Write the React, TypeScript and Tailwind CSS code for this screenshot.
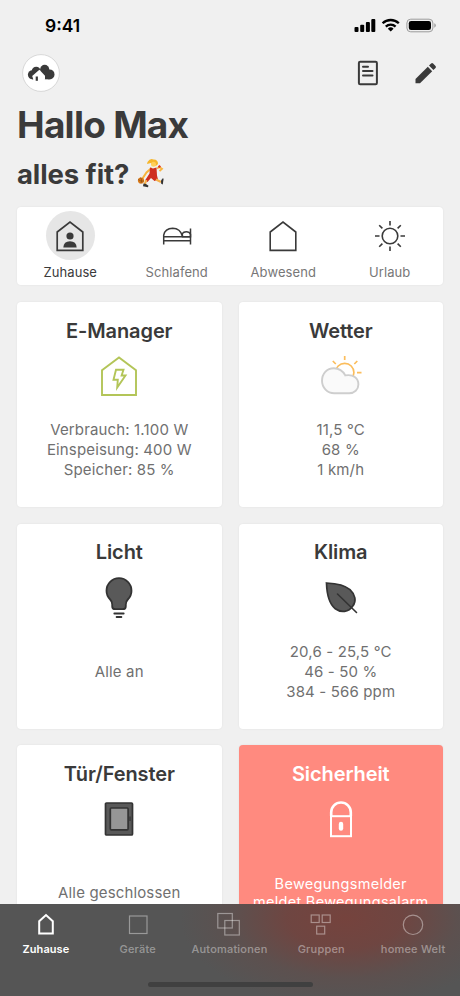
import React from 'react';
import clsx from 'clsx';

const modes = [
    { label: 'Zuhause', icon: <HomePersonIcon />, active: true },
    { label: 'Schlafend', icon: <BedIcon /> },
    { label: 'Abwesend', icon: <HouseIcon /> },
    { label: 'Urlaub', icon: <SunIcon /> },
];

const cards = [
    { title: 'E-Manager', icon: <EnergyIcon />, lines: ['Verbrauch: 1.100 W', 'Einspeisung: 400 W', 'Speicher: 85 %'] },
    { title: 'Wetter', icon: <WeatherIcon />, lines: ['11,5 °C', '68 %', '1 km/h'] },
    { title: 'Licht', icon: <BulbIcon />, lines: ['Alle an'] },
    { title: 'Klima', icon: <LeafIcon />, lines: ['20,6 - 25,5 °C', '46 - 50 %', '384 - 566 ppm'] },
    { title: 'Tür/Fenster', icon: <WindowIcon />, lines: ['Alle geschlossen'] },
    { title: 'Sicherheit', icon: <LockIcon />, lines: ['Bewegungsmelder', 'meldet Bewegungsalarm'], alert: true },
];

const tabs = [
    { label: 'Zuhause', icon: <path d="M8.2 21.5V9.3L15 3l6.800 6.300v12.200z" strokeWidth="2" />, active: true },
    { label: 'Geräte', icon: <rect x="6.5" y="4" width="17.5" height="17.5" /> },
    {
        label: 'Automationen',
        icon: (
            <>
                <rect x="3.8" y="1.5" width="14.5" height="14.5" />
                <rect x="10.8" y="8.5" width="14.5" height="14.5" />
            </>
        ),
    },
    {
        label: 'Gruppen',
        icon: (
            <>
                <rect x="5.2" y="3" width="8" height="7.5" />
                <rect x="16.2" y="3" width="8" height="7.500" />
                <rect x="10.7" y="14.2" width="8" height="7.800" />
            </>
        ),
    },
    { label: 'homee Welt', icon: <circle cx="15" cy="12.800" r="9.700" /> },
];

export default function App() {
    return (
        <div className="flex h-[996px] w-[460px] flex-col overflow-hidden bg-[#f0f0f0] font-['Inter',sans-serif] text-[#3a3a3a]">
            <main className="h-[904px] overflow-hidden">
                <StatusBar />

                <header className="flex h-[46px] items-center justify-between px-[22px]">
                    <HomeeLogo />
                    <div className="flex items-center gap-[35px]">
                        <NotesIcon />
                        <PencilIcon />
                    </div>
                </header>

                <div className="h-[111px] pl-[17px]">
                    <h1 className="pt-[3px] text-[37px] leading-[52px] font-bold tracking-[-0.75px] whitespace-nowrap">Hallo Max</h1>
                    <div className="flex items-center gap-2">
                        <h2 className="pt-px text-[27.5px] leading-[44px] font-bold tracking-[-0.1px] whitespace-nowrap">alles fit?</h2>
                        <BasketballIcon />
                    </div>
                </div>

                <section className="mx-[17px] flex h-[78px] rounded-[4px] bg-white shadow-[0_0_2px_rgba(0,0,0,0.08)]">
                    {modes.map((mode) => (
                        <div key={mode.label} className="flex flex-1 flex-col items-center pt-[4px]">
                            <div
                                className={clsx(
                                    'flex h-[49px] w-[49px] items-center justify-center rounded-full',
                                    mode.active && 'bg-[#e6e6e6]'
                                )}
                            >
                                {mode.icon}
                            </div>
                            <span
                                className={clsx(
                                    'pt-[3px] text-[13px] leading-[18px] tracking-[0.08px]',
                                    mode.active ? 'text-[#3a3a3a]' : 'text-[#777777]'
                                )}
                            >
                                {mode.label}
                            </span>
                        </div>
                    ))}
                </section>

                <section className="mx-[17px] mt-[17px] grid grid-cols-2 gap-x-[17px] gap-y-[16.5px]">
                    {cards.map((card) => (
                        <div
                            key={card.title}
                            className={clsx(
                                'flex h-[205px] flex-col items-center rounded-[4px] pt-[14.5px] text-center shadow-[0_0_2px_rgba(0,0,0,0.08)]',
                                card.alert ? 'bg-[#ff8a7f] text-white' : 'bg-white'
                            )}
                        >
                            <h3 className="text-[20px] leading-[28px] font-semibold tracking-[-0.1px] whitespace-nowrap">{card.title}</h3>
                            <div className="mt-[6.500px] flex h-[50px] items-center justify-center">{card.icon}</div>
                            <div
                                className={clsx(
                                    'mt-[19px] flex h-[60px] flex-col justify-center whitespace-nowrap',
                                    card.alert
                                        ? 'text-[14.5px] leading-[18px] tracking-[0.3px]'
                                        : 'text-[15px] leading-[20px] tracking-[0.15px] text-[#707070]'
                                )}
                            >
                                {card.lines.map((line) => (
                                    <p key={line}>{line}</p>
                                ))}
                            </div>
                        </div>
                    ))}
                </section>
            </main>

            <nav className="h-[92px] bg-[#555555] bg-[radial-gradient(ellipse_165px_88px_at_345px_14px,rgba(119,66,60,0.95),rgba(115,67,62,0.85)_35%,rgba(100,76,73,0.5)_68%,rgba(85,85,85,0)_100%)]">
                <div className="grid h-[76px] w-[459px] grid-cols-5 pt-[8px]">
                    {tabs.map((tab) => (
                        <div
                            key={tab.label}
                            className={clsx(
                                'flex flex-col items-center whitespace-nowrap',
                                tab.active ? 'text-white' : 'text-white/40'
                            )}
                        >
                            <svg width="30" height="26" viewBox="0 0 30 26" fill="none" stroke="currentColor" strokeWidth="1.2">
                                {tab.icon}
                            </svg>
                            <span
                                className={clsx(
                                    'pt-[3px] text-[11px] leading-[16px]',
                                    tab.active ? 'font-semibold tracking-[0.05px]' : 'font-medium tracking-[0.2px]'
                                )}
                            >
                                {tab.label}
                            </span>
                        </div>
                    ))}
                </div>
                <div className="mx-auto mt-[1.500px] h-[5px] w-[165px] rounded-full bg-[#404040]" />
            </nav>
        </div>
    );
}

function StatusBar() {
    return (
        <div className="flex h-[50px] items-center justify-between pt-[2px] pr-[24px] pl-[45px] text-black">
            <span className="text-[17.5px] font-semibold tracking-[0px]">9:41</span>
            <svg width="82" height="16" viewBox="0 0 82 16">
                <rect x="0.500" y="9" width="4" height="5" rx="1" />
                <rect x="6.200" y="6.700" width="4" height="7.300" rx="1" />
                <rect x="11.900" y="4" width="4" height="10" rx="1" />
                <rect x="17.300" y="1" width="4" height="13" rx="1" />
                <g fill="none" stroke="#000" strokeWidth="2.3">
                    <path d="M28.6 5.3a11.6 11.6 0 0 1 16.2 0" />
                    <path d="M31.8 8.6a7 7 0 0 1 9.8 0" />
                </g>
                <path d="M33.8 10.7a4.2 4.2 0 0 1 5.8 0l-2.9 2.9z" />
                <rect x="52.9" y="1.2" width="26" height="12.6" rx="3.8" fill="none" stroke="#9b9b9b" />
                <rect x="54.8" y="3" width="22.2" height="9" rx="2.3" />
                <path d="M80.3 5.3q1.5.6 1.5 2.2t-1.5 2.2z" fill="#9b9b9b" />
            </svg>
        </div>
    );
}

function HomeeLogo() {
    return (
        <svg width="38" height="38" viewBox="0 0 38 38">
            <circle cx="19" cy="19" r="18.4" fill="#fff" stroke="#cfcfcf" strokeWidth="0.8" />
            <g fill="#3a3a3a">
                <circle cx="10.4" cy="20.8" r="4.5" />
                <circle cx="14.2" cy="17.3" r="4.5" />
                <circle cx="22.7" cy="15.4" r="4.6" />
                <circle cx="27.5" cy="20.4" r="5" />
                <path d="M10 17h17v8.300H10z" />
            </g>
            <path d="M10.2 22l7.200-6.200 5.600 6v3.500l-1.200 1.700H11.600l-.6-2.500z" fill="#fff" />
            <rect x="13.700" y="22.500" width="2.200" height="4.300" fill="#3a3a3a" />
        </svg>
    );
}

function NotesIcon() {
    return (
        <svg width="22" height="26" viewBox="0 0 22 26" fill="none" stroke="#3a3a3a" strokeWidth="2">
            <rect x="1.9" y="1.7" width="18" height="22.6" rx="1.3" />
            <path d="M6 6.7h5M6 11h9.5M6 15.5h9.5" strokeLinecap="round" />
        </svg>
    );
}

function PencilIcon() {
    return (
        <svg width="24" height="24" viewBox="0 0 24 24" fill="#3a3a3a">
            <path d="M1.500 18 13.8 5.800l4.400 4.400L6 22.300H1.500z" />
            <path d="m15 4.600 2.1-2.1q1-1 2 0l2.400 2.400q1 1 0 2l-2.100 2.100z" />
        </svg>
    );
}

function BasketballIcon() {
    return (
        <svg width="28" height="32" viewBox="0 0 28 32">
            <path d="M10.500 4q2.500-4 6-2.500 4.500-.2 4.500 4.500-2 3-4.500 1.500l-2.500-2.500-4 1z" fill="#f6b62d" />
            <circle cx="16.500" cy="6.300" r="2.500" fill="#ffcf5c" />
            <path d="M14 10.500 9.500 14.500 6 19.800" fill="none" stroke="#f9b43c" strokeWidth="2" strokeLinecap="round" />
            <path d="M20 10.500l2.500-1.500 2.500 1.800-2.500 2.400" fill="none" stroke="#f9b43c" strokeWidth="1.800" />
            <path d="m13 9.500 3 1 3.500-1 .5 8 1 4-3.500 1.500-3.500-3-3.500 4-2.500-1.500 4.500-7z" fill="#cf2d1e" />
            <path d="m9.200 22-1.400 4.500M19 21.500l5 2.500" fill="none" stroke="#f5b04a" strokeWidth="2.200" />
            <path d="m6.500 25.600 2.500.4 2.500 1.700-.6 1.500-4.900-1z" fill="#333" />
            <path d="m24 22.400 1.800-2.200.8.6-.8 5.700-1.600-.8z" fill="#333" />
            <path d="m20.800 8.200 1.900-1.200 1.300 1.800-2 1.400z" fill="#dd3524" />
            <circle cx="4" cy="22.5" r="3.1" fill="#d87918" />
            <path d="M1.2 21.5q3 2.5 5.6 1.5M3.5 19.5q2 2 .5 6" fill="none" stroke="#7c4213" strokeWidth="0.6" />
        </svg>
    );
}

function HomePersonIcon() {
    return (
        <svg width="30" height="32" viewBox="0 0 30 32" fill="none" stroke="#3a3a3a" strokeWidth="1.7">
            <path d="M2.2 30.4V12L15 2l12.8 10v18.4z" />
            <circle cx="15" cy="16" r="3.6" fill="#3a3a3a" stroke="none" />
            <path d="M8.3 27.5q.4-6.3 6.7-6.3t6.7 6.3z" fill="#3a3a3a" stroke="none" />
        </svg>
    );
}

function BedIcon() {
    return (
        <svg width="30" height="20" viewBox="0 0 30 20" fill="none" stroke="#3a3a3a" strokeWidth="1.5">
            <path d="M1.7 18.5V9.2Q3 2.5 10.7 2.3q7.5 0 9.8 8M28.5 2.5v16M1.7 10.8h26.8M1.7 14.8h26.8" />
            <path d="M20.3 7.7q1.2-2 4-2 3.2 0 4.2 2.6v2.5h-8z" />
        </svg>
    );
}

function HouseIcon() {
    return (
        <svg width="30" height="32" viewBox="0 0 30 32" fill="none" stroke="#3a3a3a" strokeWidth="1.6">
            <path d="M2.2 30.4V12L15 2l12.8 10v18.4z" />
        </svg>
    );
}

function SunIcon() {
    return (
        <svg width="32" height="32" viewBox="0 0 32 32" fill="none" stroke="#3a3a3a" strokeWidth="1.6">
            <circle cx="16" cy="16" r="7.8" />
            <path d="M16 1v4.5M16 26.5V31M1 16h4.5M26.5 16H31M5.2 5.2l3.2 3.2M23.6 23.6l3.2 3.2M26.8 5.2l-3.2 3.2M8.4 23.6l-3.2 3.2" />
        </svg>
    );
}

function EnergyIcon() {
    return (
        <svg width="38" height="42" viewBox="0 0 38 42" fill="none" stroke="#b3c558" strokeWidth="1.9">
            <path d="M2 40V15.3L19 2.5l17 12.8V40z" />
            <path d="M16 14.700h7.500L21.600 20.500h3.900l-8.300 12 .6-7.800h-4.300z" />
        </svg>
    );
}

function WeatherIcon() {
    return (
        <svg width="42" height="42" viewBox="0 0 42 42" fill="none">
            <g stroke="#fbbd5c" strokeWidth="1.7">
                <circle cx="24.7" cy="17.5" r="9.2" />
                <path d="M24.7 1v4M12.8 6l3 3M37.3 6l-3 3M37 17.7h4.5" />
            </g>
            <path
                d="M13.8 13.2c5 0 9.2 2.800 11.500 7.200 7.800-1.500 13.100 2.700 13.100 9 0 5.200-4 8.800-9.200 8.800H14.300C7.300 38.200 2 32.700 2 25.800c0-7.100 4.800-12.600 11.800-12.600z"
                fill="#fafafa"
                stroke="#cecece"
                strokeWidth="1.9"
            />
        </svg>
    );
}

function BulbIcon() {
    return (
        <svg width="30" height="42" viewBox="0 0 30 42" fill="none" stroke="#333333" strokeWidth="1.8" strokeLinecap="round">
            <path
                d="M15 1.200A12.500 12.500 0 0 0 2.500 13.700c0 4 1.700 6.800 3.700 8.800 1.600 1.600 2 2.700 2 5v1.700q0 3 3 3h7.600q3 0 3-3v-1.700c0-2.300.4-3.400 2-5 2-2 3.700-4.800 3.700-8.800A12.500 12.500 0 0 0 15 1.200z"
                fill="#595959"
            />
            <path d="M10.300 36.500h9.400M12.600 40h4.800" />
        </svg>
    );
}

function LeafIcon() {
    return (
        <svg width="34" height="34" viewBox="0 0 34 34" fill="none" stroke="#333333" strokeWidth="1.7">
            <path
                d="M2.500 2c9.500.4 18 1.700 23.500 6.700 5.300 5 6.700 11.300 2.800 16.300-4.300 6.300-11.800 7-17.500 2.800C4.800 22.500 2.800 12 2.500 2z"
                fill="#595959"
            />
            <path d="M13.500 13 32.500 31.500" strokeLinecap="round" strokeWidth="1.6" />
        </svg>
    );
}

function WindowIcon() {
    return (
        <svg width="30" height="36" viewBox="0 0 30 36" stroke="#333333" strokeWidth="1.7">
            <rect x="1.5" y="2" width="27" height="32" rx="1" fill="#595959" />
            <rect x="6.3" y="7" width="17.8" height="21.8" rx="1" fill="#969696" />
            <path d="M26 15.5v4.5" strokeWidth="1.3" />
        </svg>
    );
}

function LockIcon() {
    return (
        <svg width="24" height="38" viewBox="0 0 24 38" fill="none" stroke="#fff" strokeWidth="2">
            <path d="M2.200 16v-3.700a9.800 9.800 0 0 1 19.600 0V16" strokeWidth="2.6" />
            <rect x="2" y="16.2" width="20" height="20" />
            <rect x="9.800" y="21.800" width="4.400" height="9" rx="2.200" fill="#fff" stroke="none" />
        </svg>
    );
}
